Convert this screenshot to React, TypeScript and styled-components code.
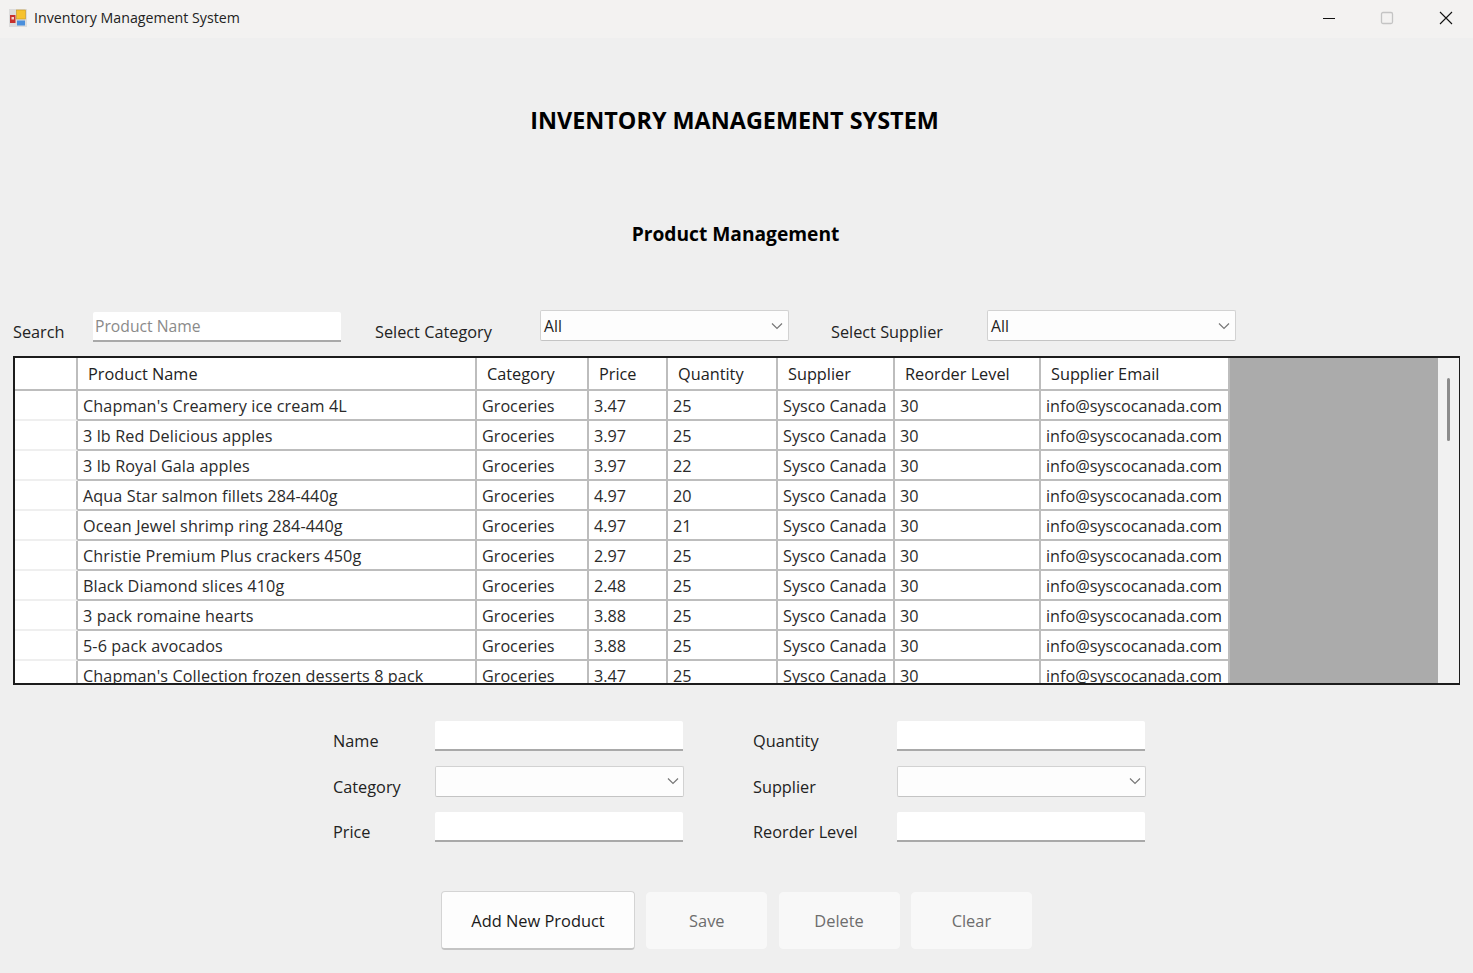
import styled, { createGlobalStyle } from "styled-components";

const GlobalStyle = createGlobalStyle`
  html, body {
    margin: 0;
    padding: 0;
    background: #efefef;
    font-family: "Open Sans", "Noto Sans", sans-serif;
    color: #1a1a1a;
  }
  * {
    box-sizing: border-box;
  }
`;

const Window = styled.div`
  width: 1473px;
  height: 973px;
  overflow: hidden;
  display: flex;
  flex-direction: column;
`;

const TitleBar = styled.div`
  height: 38px;
  flex: none;
  display: flex;
  align-items: center;
  padding: 0 0 3px 9px;
  background: #f3f2f1;
`;

const AppTitle = styled.span`
  margin-left: 7px;
  font-size: 14.2px;
  color: #222;
`;

const WindowControls = styled.div`
  margin-left: auto;
  margin-right: -2px;
  display: flex;
  align-items: center;
`;

const ControlSlot = styled.div`
  width: 58.5px;
  height: 35px;
  display: flex;
  align-items: center;
  justify-content: center;
`;

const Heading = styled.h1`
  margin: 65px 0 0;
  height: 34px;
  line-height: 34px;
  text-align: center;
  font-size: 23.4px;
  font-weight: 700;
  color: #000;
  transform: translateX(-2px);
`;

const SubHeading = styled.h2`
  margin: 82px 0 0;
  height: 30px;
  line-height: 30px;
  text-align: center;
  font-size: 19.2px;
  font-weight: 700;
  color: #000;
  transform: translateX(-1px);
`;

const FilterRow = styled.div`
  margin-top: 62px;
  height: 32px;
  padding-left: 13px;
  display: flex;
  align-items: flex-start;
`;

const Label = styled.span<{ $width: number }>`
  width: ${(p) => p.$width}px;
  flex: none;
  font-size: 16.3px;
  line-height: 22px;
  padding-top: 10px;
  color: #222;
`;

const TextBox = styled.div`
  width: 248px;
  height: 30px;
  margin-top: 1px;
  flex: none;
  background: #fff;
  border-bottom: 2px solid #a9a9a9;
  border-radius: 2px 2px 0 0;
  padding: 3px 2px 0;
  font-size: 15.7px;
  line-height: 22px;
  color: #8a8a8a;
`;

const ComboBox = styled.div`
  width: 249px;
  height: 31px;
  margin-top: -1px;
  flex: none;
  background: #fdfdfd;
  border: 1px solid #d2d2d2;
  border-bottom-color: #c4c4c4;
  border-radius: 2px;
  display: flex;
  align-items: center;
  justify-content: space-between;
  padding: 0 5px 0 3px;
  font-size: 15.7px;
  color: #222;
`;

const FilterGap = styled.div<{ $width: number }>`
  width: ${(p) => p.$width}px;
  flex: none;
`;

const GridFrame = styled.div`
  margin: 13px 13px 0 13px;
  height: 329px;
  border: 1px solid #1c1c1c;
  border-width: 2px 1px 2px 2px;
  background: #ababab;
  display: flex;
  overflow: hidden;
`;

const GridBody = styled.div`
  flex: 1;
  overflow: hidden;
`;

const Table = styled.div`
  width: 1215px;
  display: grid;
  grid-template-columns: 63px 399px 112px 79px 110px 117px 146px 189px;
  grid-template-rows: 33px;
  grid-auto-rows: 30px;
  background: #fff;
`;

const HeaderCell = styled.div`
  padding-left: 10px;
  background: #fff;
  border-right: 2px solid #bdbdbd;
  border-bottom: 2px solid #bdbdbd;
  font-size: 16.3px;
  line-height: 32px;
  color: #222;
  white-space: nowrap;
  &:last-child {
    border-right: none;
  }
`;

const RowHead = styled.div`
  background: #fff;
  border-right: 2px solid #bdbdbd;
  border-bottom: 2px solid #efefef;
`;

const Cell = styled.div<{ $name?: boolean }>`
  padding-left: 5px;
  background: #fff;
  border-right: 2px solid #bdbdbd;
  border-bottom: 2px solid #bdbdbd;
  font-size: 16.2px;
  letter-spacing: ${(p) => (p.$name ? "0.1px" : "0")};
  line-height: 31px;
  color: #2a2a2a;
  white-space: nowrap;
  overflow: hidden;
`;

const ScrollTrack = styled.div`
  width: 21px;
  flex: none;
  background: #f1f1f1;
  display: flex;
  justify-content: center;
  padding-top: 20px;
`;

const ScrollThumb = styled.div`
  width: 3px;
  height: 63px;
  border-radius: 2px;
  background: #8b8b8b;
`;

const Form = styled.div`
  margin: 35px 0 0 333px;
  display: grid;
  grid-template-columns: 102px 248px 70px 144px 249px;
  grid-template-rows: 31px 31px 31px;
  row-gap: 14.5px;
  width: 813px;
`;

const FormLabel = styled.span`
  font-size: 16.3px;
  line-height: 22px;
  padding-top: 10px;
  color: #222;
  white-space: nowrap;
`;

const Empty = styled.div``;

const FormCombo = styled(ComboBox)`
  margin-top: 0;
  padding-right: 4px;
`;

const Buttons = styled.div`
  margin: 49px 0 0 441px;
  display: flex;
  align-items: center;
  gap: 11.3px;
`;

const Button = styled.div<{ $primary?: boolean }>`
  width: ${(p) => (p.$primary ? "194px" : "121px")};
  height: ${(p) => (p.$primary ? "59px" : "57px")};
  display: flex;
  align-items: center;
  justify-content: center;
  border-radius: 4px;
  background: ${(p) => (p.$primary ? "#fdfdfd" : "#f8f8f8")};
  border: 1px solid ${(p) => (p.$primary ? "#d4d4d4" : "#f8f8f8")};
  border-bottom: ${(p) => (p.$primary ? "2px solid #c4c4c4" : "1px solid #f8f8f8")};
  font-size: 16.4px;
  color: ${(p) => (p.$primary ? "#1a1a1a" : "#6d6d6d")};
`;

const columns = [
  "Product Name",
  "Category",
  "Price",
  "Quantity",
  "Supplier",
  "Reorder Level",
  "Supplier Email",
];

const products: [string, string, string][] = [
  ["Chapman's Creamery ice cream 4L", "3.47", "25"],
  ["3 lb Red Delicious apples", "3.97", "25"],
  ["3 lb Royal Gala apples", "3.97", "22"],
  ["Aqua Star salmon fillets 284-440g", "4.97", "20"],
  ["Ocean Jewel shrimp ring 284-440g", "4.97", "21"],
  ["Christie Premium Plus crackers 450g", "2.97", "25"],
  ["Black Diamond slices 410g", "2.48", "25"],
  ["3 pack romaine hearts", "3.88", "25"],
  ["5-6 pack avocados", "3.88", "25"],
  ["Chapman's Collection frozen desserts 8 pack", "3.47", "25"],
];

function AppIcon() {
  return (
    <svg width="18" height="18" viewBox="0 0 18 18">
      <rect x="0" y="0" width="18" height="18" fill="#dcdcdc" />
      <rect x="7.5" y="1" width="9" height="9" fill="#f6c22e" stroke="#c9951a" strokeWidth="0.6" />
      <rect x="1" y="6" width="5.5" height="8" fill="#c8302c" />
      <rect x="2.5" y="8" width="2.5" height="2.5" fill="#f4d0c8" />
      <rect x="8" y="11.5" width="8" height="5" fill="#4a8fdc" />
    </svg>
  );
}

function Chevron() {
  return (
    <svg width="12" height="8" viewBox="0 0 12 8" fill="none">
      <path d="M1 1.5 L6 6.5 L11 1.5" stroke="#777" strokeWidth="1.2" />
    </svg>
  );
}

function Row({ name, price, qty }: { name: string; price: string; qty: string }) {
  return (
    <>
      <RowHead />
      <Cell $name>{name}</Cell>
      <Cell>Groceries</Cell>
      <Cell>{price}</Cell>
      <Cell>{qty}</Cell>
      <Cell>Sysco Canada</Cell>
      <Cell>30</Cell>
      <Cell>info@syscocanada.com</Cell>
    </>
  );
}

function App() {
  return (
    <Window>
      <GlobalStyle />
      <TitleBar>
        <AppIcon />
        <AppTitle>Inventory Management System</AppTitle>
        <WindowControls>
          <ControlSlot>
            <svg width="14" height="14" viewBox="0 0 14 14">
              <path d="M1 7.5 H13" stroke="#111" strokeWidth="1" />
            </svg>
          </ControlSlot>
          <ControlSlot>
            <svg width="14" height="14" viewBox="0 0 14 14" fill="none">
              <rect x="1.5" y="1.5" width="11" height="11" rx="1.5" stroke="#c4c4c4" strokeWidth="1.3" />
            </svg>
          </ControlSlot>
          <ControlSlot>
            <svg width="14" height="14" viewBox="0 0 14 14">
              <path d="M1 1 L13 13 M13 1 L1 13" stroke="#111" strokeWidth="1.1" />
            </svg>
          </ControlSlot>
        </WindowControls>
      </TitleBar>

      <Heading>INVENTORY MANAGEMENT SYSTEM</Heading>
      <SubHeading>Product Management</SubHeading>

      <FilterRow>
        <Label $width={80}>Search</Label>
        <TextBox>Product Name</TextBox>
        <FilterGap $width={34} />
        <Label $width={165}>Select Category</Label>
        <ComboBox>
          All
          <Chevron />
        </ComboBox>
        <FilterGap $width={42} />
        <Label $width={156}>Select Supplier</Label>
        <ComboBox>
          All
          <Chevron />
        </ComboBox>
      </FilterRow>

      <GridFrame>
        <GridBody>
          <Table>
            <HeaderCell />
            {columns.map((c) => (
              <HeaderCell key={c}>{c}</HeaderCell>
            ))}
            {products.map(([name, price, qty]) => (
              <Row key={name} name={name} price={price} qty={qty} />
            ))}
          </Table>
        </GridBody>
        <ScrollTrack>
          <ScrollThumb />
        </ScrollTrack>
      </GridFrame>

      <Form>
        <FormLabel>Name</FormLabel>
        <TextBox />
        <Empty />
        <FormLabel>Quantity</FormLabel>
        <TextBox />
        <FormLabel>Category</FormLabel>
        <FormCombo>
          <span />
          <Chevron />
        </FormCombo>
        <Empty />
        <FormLabel>Supplier</FormLabel>
        <FormCombo>
          <span />
          <Chevron />
        </FormCombo>
        <FormLabel>Price</FormLabel>
        <TextBox />
        <Empty />
        <FormLabel>Reorder Level</FormLabel>
        <TextBox />
      </Form>

      <Buttons>
        <Button $primary>Add New Product</Button>
        <Button>Save</Button>
        <Button>Delete</Button>
        <Button>Clear</Button>
      </Buttons>
    </Window>
  );
}

export default App;
